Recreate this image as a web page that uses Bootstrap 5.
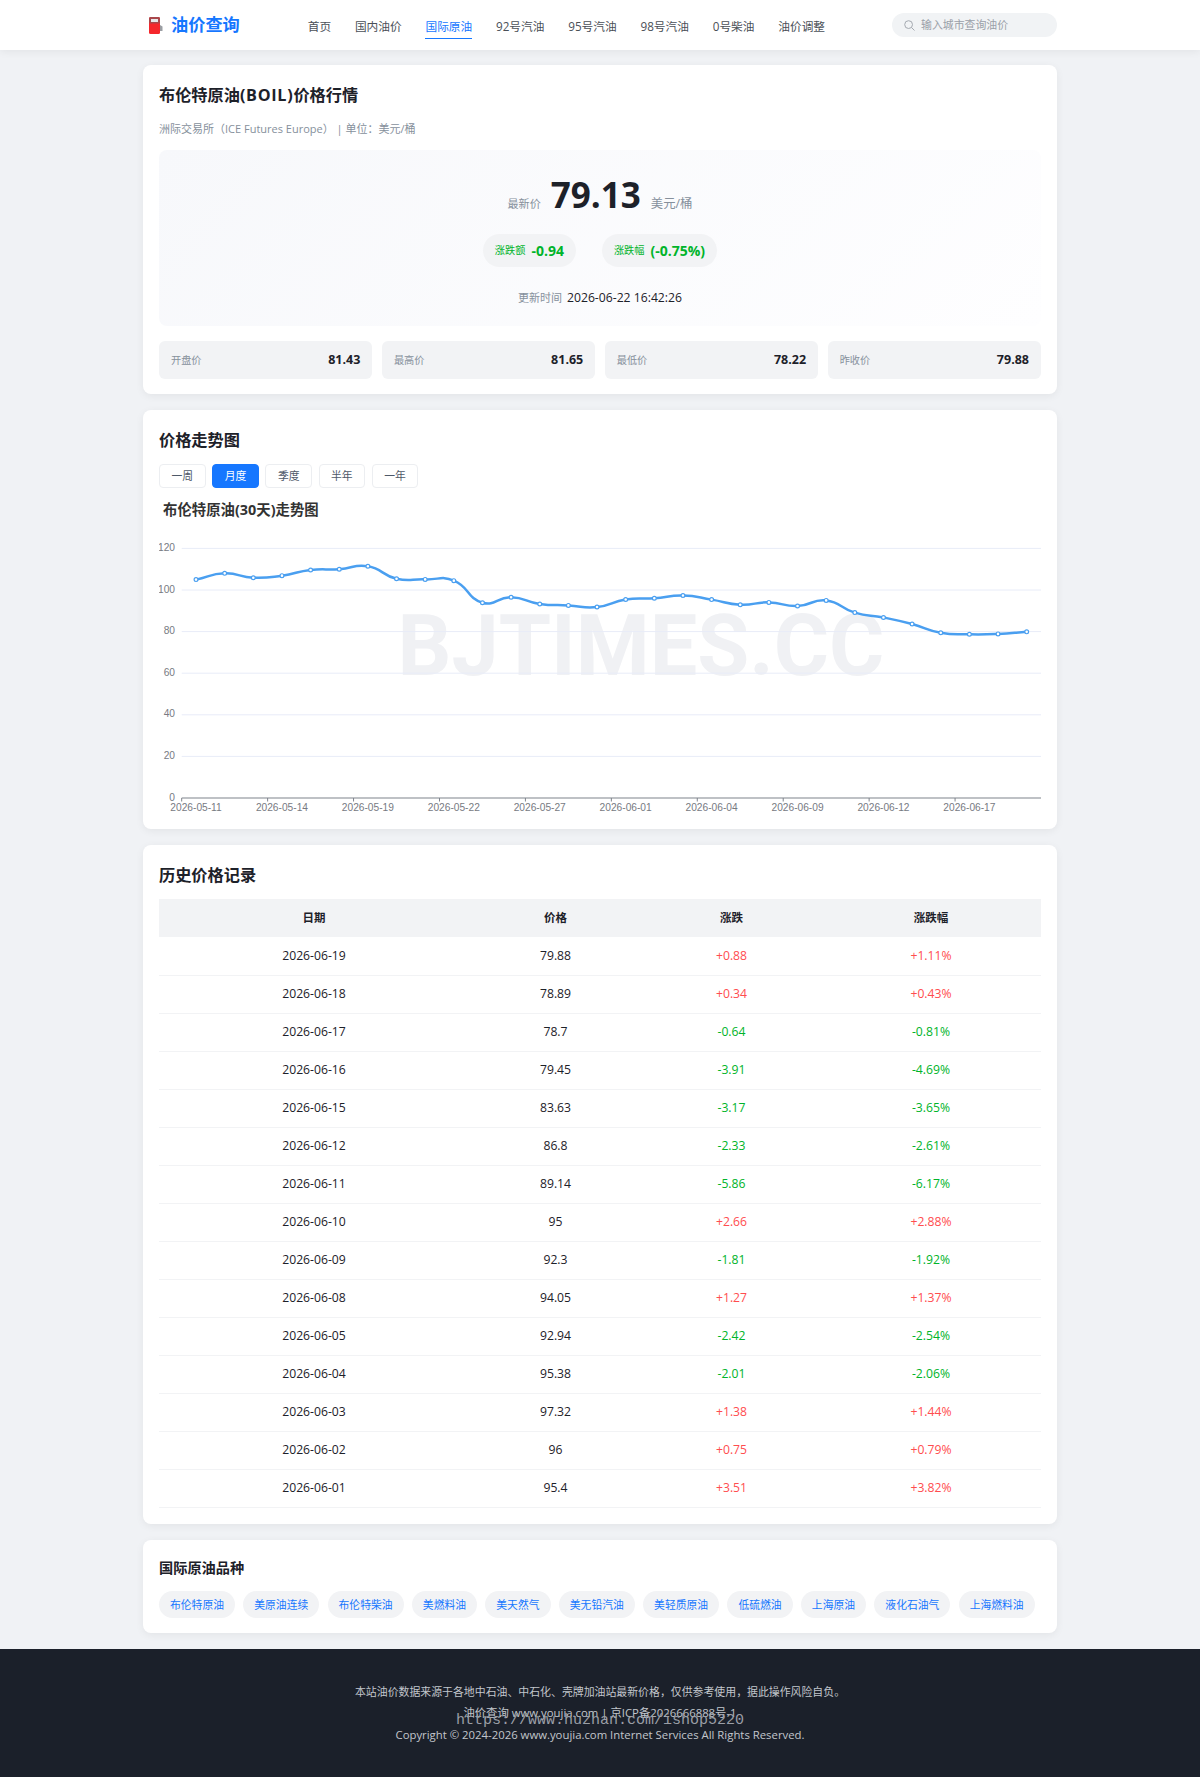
<!DOCTYPE html>
<html lang="zh-CN">
<head>
    <meta charset="UTF-8">
    <meta name="viewport" content="width=device-width, initial-scale=1.0">
    <title>布伦特原油(BOIL)价格行情</title>
    <link href="https://cdn.jsdelivr.net/npm/bootstrap@5.3.0/dist/css/bootstrap.min.css" rel="stylesheet">
    <style>
        body {
            background-color: #f0f2f5;
            font-family: "Open Sans", "Noto Sans CJK SC", sans-serif;
            color: #1d2129;
            font-size: 12px;
        }
        .page-wrap { width: 914px; margin: 0 auto; }
        .main-wrap { padding-top: 15px; }
        .site-head {
            --bs-navbar-nav-link-padding-x: 0;
            height: 50px;
            background: #fff;
            box-shadow: 0 2px 8px rgba(0,0,0,.06);
            padding: 0;
        }
        .brand-text { color: #1677ff; font-size: 17.2px; font-weight: 700; line-height: 24px; }
        .brand-link { width: 164.7px; flex: none; padding: 0 0 0 6px; margin: 0; gap: 7px; text-decoration: none; }
        .site-nav { gap: 23.8px; margin: 0; flex: none; }
        .site-nav .nav-link {
            padding: 5px 0 0;
            height: 28px;
            line-height: 20px;
            font-size: 11.7px;
            color: #4a4f57;
            white-space: nowrap;
            border-bottom: 1.5px solid transparent;
        }
        .site-nav .nav-link.active { color: #1677ff; border-bottom-color: #1677ff; }
        .search-box {
            width: 165px;
            flex: none;
            height: 24px;
            background: #f1f3f5;
            border-radius: 12px;
            padding-left: 12px;
            gap: 6px;
        }
        .search-box input {
            border: 0;
            background: transparent;
            outline: 0;
            padding: 0;
            width: 130px;
            font-size: 10.9px;
            color: #333;
        }
        .search-box input::placeholder { color: #9aa0a8; opacity: 1; }
        .panel {
            border: 0;
            border-radius: 8px;
            box-shadow: 0 2px 8px rgba(0,0,0,.06);
            padding: 16px;
            margin-bottom: 16px;
        }
        .panel-tight { padding-bottom: 15px; }
        .panel-title { font-size: 16.2px; font-weight: 700; line-height: 28px; margin: 0; }
        .wide-latin { letter-spacing: .7px; }
        .sub-line { font-size: 11px; color: #86909c; line-height: 18px; margin: 11px 0 12px; }
        .hero-box {
            height: 175.5px;
            border-radius: 8px;
            background: linear-gradient(135deg, #f7f8fb 0%, #fefeff 100%);
            padding-top: 21px;
        }
        .price-line { height: 48px; gap: 10px; color: #86909c; font-size: 11.1px; }
        .price-unit { font-size: 12.4px; }
        .price-num { font-size: 35px; font-weight: 700; color: #1d2129; line-height: 48px; }
        .pill-row { gap: 26px; margin-top: 14.5px; }
        .change-pill {
            height: 33px;
            border-radius: 16.5px;
            background: #f2f3f5;
            padding: 0 12px;
            gap: 6px;
            color: #00b42a;
            font-size: 10.2px;
        }
        .change-pill span { margin-top: 2px; }
        .change-pill b { font-size: 14px; }
        .update-line { margin-top: 22.5px; line-height: 18px; font-size: 11px; color: #86909c; gap: 5px; }
        .update-line span + span { color: #1d2129; font-size: 12.2px; }
        .stat-row { margin-top: 15.5px; gap: 9.5px; }
        .stat-box {
            flex: 1 1 0;
            height: 38px;
            background: #f2f3f5;
            border-radius: 6px;
            padding: 0 12px;
            font-size: 10.2px;
            color: #86909c;
        }
        .stat-box span { margin-top: 1px; }
        .stat-box b { font-size: 12.5px; color: #1d2129; }
        .range-btns { gap: 6.6px; margin-top: 10px; }
        .range-btn {
            width: 46.6px;
            height: 24px;
            padding: 0;
            font-size: 10.8px;
            line-height: 22px;
            color: #4e5969;
            background: #fff;
            border: 1px solid #eceef1;
            border-radius: 4px;
        }
        .range-btn.active, .range-btn.active:hover { background: #1677ff; border-color: #1677ff; color: #fff; }
        .chart-title { font-size: 14.4px; font-weight: 700; color: #333; line-height: 20px; margin: 11.5px 0 0 4px; }
        .chart-area { display: block; width: 882px; height: 300px; margin-bottom: -6.5px; }
        .chart-area text { font-family: "Liberation Sans", sans-serif; font-size: 10.2px; fill: #777a82; }
        .chart-area .wm-text { font-family: Roboto, sans-serif; font-size: 84.5px; font-weight: 700; fill: #f0f1f4; }
        .price-table { margin: 10px 0 0; table-layout: fixed; width: 882px; }
        .price-table th, .price-table td {
            text-align: center;
            vertical-align: middle;
            padding: 0;
            height: 38px;
            font-size: 12.2px;
            color: #1d2129;
            border-color: #f2f3f5;
            background: transparent;
            box-shadow: none;
        }
        .price-table thead th { background: #f2f3f5; font-size: 11.5px; font-weight: 700; border: 0; }
        .price-table td.up-val { color: #ff4d4f; }
        .price-table td.down-val { color: #00b42a; }
        .col-date { width: 310px; }
        .col-price { width: 173px; }
        .col-diff { width: 179px; }
        .col-rate { width: 220px; }
        .panel-title-sm { font-size: 14.2px; font-weight: 700; line-height: 24px; margin: 0; }
        .tag-row { gap: 8.3px; margin-top: 11px; }
        .oil-tag {
            height: 27px;
            line-height: 27px;
            padding: 0 11px;
            border-radius: 13.5px;
            background: #f2f3f5;
            color: #1677ff;
            font-size: 10.8px;
            text-decoration: none;
        }
        .site-foot {
            position: relative;
            height: 129px;
            background: #1b202a;
            color: #c2c6cc;
            text-align: center;
            padding-top: 33.5px;
            font-size: 10.9px;
        }
        .site-foot p { margin: 0; line-height: 20px; }
        .foot-lines { line-height: 22px; font-size: 11.35px; }
        .wm-foot {
            position: absolute;
            left: 0;
            right: 0;
            top: 63px;
            font-family: "Liberation Mono", monospace;
            font-size: 15px;
            line-height: 18px;
            color: #9a9ea6;
        }
    </style>
</head>
<body>
    <nav class="navbar navbar-expand site-head">
        <div class="page-wrap d-flex align-items-center">
            <a class="navbar-brand d-flex align-items-center brand-link" href="#">
                <svg width="15" height="17" viewBox="0 0 15 17">
                    <rect x="0" y="0" width="11" height="17" rx="1.5" fill="#f5272c"/>
                    <rect x="0" y="0" width="11" height="6.5" rx="1.5" fill="#a8484c"/>
                    <rect x="2" y="2" width="7" height="3" fill="#e8e8ea"/>
                    <path d="M11 8 L13.5 9.5 V14 H11 Z" fill="#9b9ea3"/>
                </svg>
                <span class="brand-text">油价查询</span>
            </a>
            <ul class="navbar-nav site-nav">
                <li class="nav-item"><a class="nav-link" href="#">首页</a></li>
                <li class="nav-item"><a class="nav-link" href="#">国内油价</a></li>
                <li class="nav-item"><a class="nav-link active" href="#">国际原油</a></li>
                <li class="nav-item"><a class="nav-link" href="#">92号汽油</a></li>
                <li class="nav-item"><a class="nav-link" href="#">95号汽油</a></li>
                <li class="nav-item"><a class="nav-link" href="#">98号汽油</a></li>
                <li class="nav-item"><a class="nav-link" href="#">0号柴油</a></li>
                <li class="nav-item"><a class="nav-link" href="#">油价调整</a></li>
            </ul>
            <div class="search-box d-flex align-items-center ms-auto">
                <svg width="11" height="11" viewBox="0 0 11 11" fill="none" stroke="#a4a9b0" stroke-width="1">
                    <circle cx="4.6" cy="4.6" r="3.9"/>
                    <path d="M7.5 7.5 L10.5 10.5"/>
                </svg>
                <input type="text" placeholder="输入城市查询油价">
            </div>
        </div>
    </nav>

    <main class="page-wrap main-wrap">
        <!-- 行情 -->
        <section class="card panel panel-tight">
            <h1 class="panel-title">布伦特原油<span class="wide-latin">(BOIL)</span>价格行情</h1>
            <p class="sub-line">洲际交易所（ICE Futures Europe） | 单位：美元/桶</p>
            <div class="hero-box d-flex flex-column align-items-center">
                <div class="price-line d-flex align-items-baseline justify-content-center">
                    <span>最新价</span>
                    <span class="price-num">79.13</span>
                    <span class="price-unit">美元/桶</span>
                </div>
                <div class="pill-row d-flex">
                    <div class="change-pill d-flex align-items-center"><span>涨跌额</span><b>-0.94</b></div>
                    <div class="change-pill d-flex align-items-center"><span>涨跌幅</span><b>(-0.75%)</b></div>
                </div>
                <div class="update-line d-flex"><span>更新时间</span><span>2026-06-22 16:42:26</span></div>
            </div>
            <div class="stat-row d-flex">
                <div class="stat-box d-flex align-items-center justify-content-between"><span>开盘价</span><b>81.43</b></div>
                <div class="stat-box d-flex align-items-center justify-content-between"><span>最高价</span><b>81.65</b></div>
                <div class="stat-box d-flex align-items-center justify-content-between"><span>最低价</span><b>78.22</b></div>
                <div class="stat-box d-flex align-items-center justify-content-between"><span>昨收价</span><b>79.88</b></div>
            </div>
        </section>

        <!-- 走势图 -->
        <section class="card panel">
            <h2 class="panel-title">价格走势图</h2>
            <div class="range-btns d-flex">
                <button class="btn range-btn" type="button">一周</button>
                <button class="btn range-btn active" type="button">月度</button>
                <button class="btn range-btn" type="button">季度</button>
                <button class="btn range-btn" type="button">半年</button>
                <button class="btn range-btn" type="button">一年</button>
            </div>
            <div class="chart-title">布伦特原油(30天)走势图</div>
            <svg id="priceChart" class="chart-area" viewBox="0 0 882 300"></svg>
        </section>

        <!-- 历史记录 -->
        <section class="card panel">
            <h2 class="panel-title">历史价格记录</h2>
            <table class="table price-table">
                <thead><tr><th class="col-date">日期</th><th class="col-price">价格</th><th class="col-diff">涨跌</th><th class="col-rate">涨跌幅</th></tr></thead>
                <tbody id="historyRows"></tbody>
            </table>
        </section>

        <!-- 品种 -->
        <section class="card panel panel-tight">
            <h2 class="panel-title-sm">国际原油品种</h2>
            <div class="tag-row d-flex">
                <a class="oil-tag" href="#">布伦特原油</a>
                <a class="oil-tag" href="#">美原油连续</a>
                <a class="oil-tag" href="#">布伦特柴油</a>
                <a class="oil-tag" href="#">美燃料油</a>
                <a class="oil-tag" href="#">美天然气</a>
                <a class="oil-tag" href="#">美无铅汽油</a>
                <a class="oil-tag" href="#">美轻质原油</a>
                <a class="oil-tag" href="#">低硫燃油</a>
                <a class="oil-tag" href="#">上海原油</a>
                <a class="oil-tag" href="#">液化石油气</a>
                <a class="oil-tag" href="#">上海燃料油</a>
            </div>
        </section>
    </main>

    <footer class="site-foot">
        <p>本站油价数据来源于各地中石油、中石化、壳牌加油站最新价格，仅供参考使用，据此操作风险自负。</p>
        <div class="foot-lines">
            油价查询 www.youjia.com | 京ICP备2026666888号-1<br>
            Copyright © 2024-2026 www.youjia.com Internet Services All Rights Reserved.
        </div>
        <div class="wm-foot">https://www.huzhan.com/ishop5220</div>
    </footer>

    <script>
        const history = [
            ['2026-06-19', '79.88', '+0.88', '+1.11%'],
            ['2026-06-18', '78.89', '+0.34', '+0.43%'],
            ['2026-06-17', '78.7', '-0.64', '-0.81%'],
            ['2026-06-16', '79.45', '-3.91', '-4.69%'],
            ['2026-06-15', '83.63', '-3.17', '-3.65%'],
            ['2026-06-12', '86.8', '-2.33', '-2.61%'],
            ['2026-06-11', '89.14', '-5.86', '-6.17%'],
            ['2026-06-10', '95', '+2.66', '+2.88%'],
            ['2026-06-09', '92.3', '-1.81', '-1.92%'],
            ['2026-06-08', '94.05', '+1.27', '+1.37%'],
            ['2026-06-05', '92.94', '-2.42', '-2.54%'],
            ['2026-06-04', '95.38', '-2.01', '-2.06%'],
            ['2026-06-03', '97.32', '+1.38', '+1.44%'],
            ['2026-06-02', '96', '+0.75', '+0.79%'],
            ['2026-06-01', '95.4', '+3.51', '+3.82%']
        ];

        // Table rows
        document.getElementById('historyRows').innerHTML = history.map(r => {
            const cls = r[2][0] === '+' ? 'up-val' : 'down-val';
            return `<tr><td>${r[0]}</td><td>${r[1]}</td><td class="${cls}">${r[2]}</td><td class="${cls}">${r[3]}</td></tr>`;
        }).join('');

        // Chart: earlier month values then the table's values, oldest first
        const earlier = [105, 108, 105.9, 106.9, 109.6, 110, 111.4, 105.4, 105.1, 104.5, 93.9, 96.5, 93.3, 92.6, 91.8];
        const values = earlier.concat(history.map(r => parseFloat(r[1])).reverse());
        const xLabels = ['2026-05-11', '2026-05-14', '2026-05-19', '2026-05-22', '2026-05-27',
                         '2026-06-01', '2026-06-04', '2026-06-09', '2026-06-12', '2026-06-17'];

        const left = 22.7, right = 882, baseY = 278, perUnit = 2.08;
        const band = (right - left) / 30;
        const px = i => left + band * (i + 0.5);
        const py = v => baseY - v * perUnit;

        let svg = '<text class="wm-text" x="482" y="155" text-anchor="middle">BJTIMES.CC</text>';
        for (let v = 20; v <= 120; v += 20) {
            svg += `<line x1="${left}" x2="${right}" y1="${py(v)}" y2="${py(v)}" stroke="#e8ecf8"/>`;
        }
        for (let v = 0; v <= 120; v += 20) {
            svg += `<text x="16" y="${py(v) + 2.5}" text-anchor="end">${v}</text>`;
        }
        svg += `<line x1="${left}" x2="${right}" y1="${baseY}" y2="${baseY}" stroke="#7f838c" stroke-width="1.2"/>`;
        xLabels.forEach((label, i) => {
            const tx = left + band * 3 * i;
            svg += `<line x1="${tx}" x2="${tx}" y1="${baseY}" y2="${baseY + 3.5}" stroke="#7f838c"/>`;
            svg += `<text x="${px(3 * i)}" y="${baseY + 13}" text-anchor="middle">${label}</text>`;
        });

        // Smooth line, same idea as a smoothed line series
        const pts = values.map((v, i) => [px(i), py(v)]);
        let d = `M${pts[0][0]} ${pts[0][1]}`;
        const ctrl = (i, sign) => {
            const p = pts[i], a = pts[Math.max(i - 1, 0)], b = pts[Math.min(i + 1, pts.length - 1)];
            const d0 = Math.hypot(p[0] - a[0], p[1] - a[1]), d1 = Math.hypot(b[0] - p[0], b[1] - p[1]);
            const ratio = sign > 0 ? d1 / (d0 + d1) : d0 / (d0 + d1);
            return [p[0] + sign * (b[0] - a[0]) * 0.5 * ratio, p[1] + sign * (b[1] - a[1]) * 0.5 * ratio];
        };
        for (let i = 0; i < pts.length - 1; i++) {
            const c1 = ctrl(i, 1), c2 = ctrl(i + 1, -1);
            d += ` C${c1[0]} ${c1[1]} ${c2[0]} ${c2[1]} ${pts[i + 1][0]} ${pts[i + 1][1]}`;
        }
        svg += `<path d="${d}" fill="none" stroke="#4a9ff0" stroke-width="2.5"/>`;
        pts.forEach(p => {
            svg += `<circle cx="${p[0]}" cy="${p[1]}" r="1.9" fill="#fff" stroke="#4a9ff0" stroke-width="1.2"/>`;
        });
        document.getElementById('priceChart').innerHTML = svg;
    </script>
    <script src="https://cdn.jsdelivr.net/npm/bootstrap@5.3.0/dist/js/bootstrap.bundle.min.js"></script>
</body>
</html>
